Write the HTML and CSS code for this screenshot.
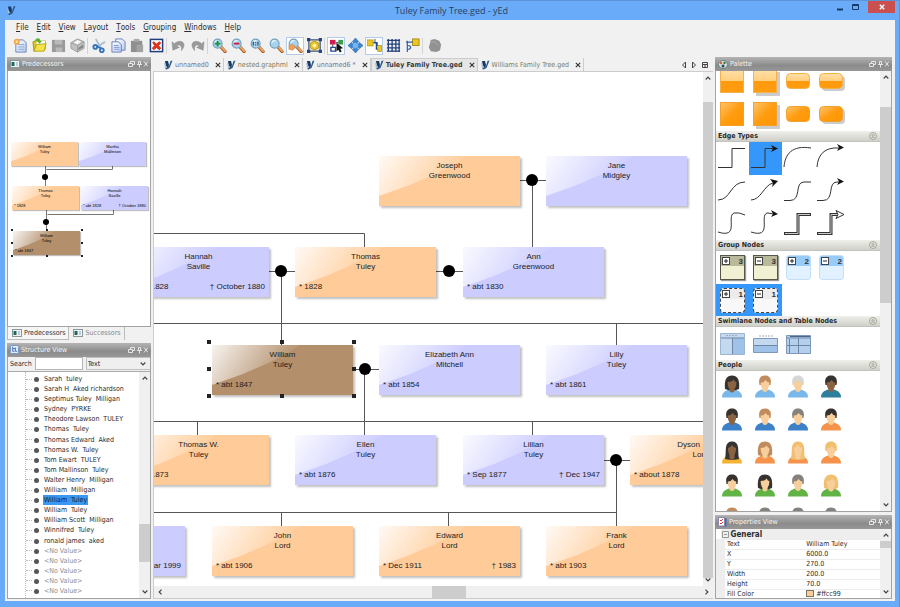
FILE: index.html
```html
<!DOCTYPE html>
<html lang="en">
<head>
<meta charset="utf-8">
<title>Tuley Family Tree.ged - yEd</title>
<link rel="stylesheet" href="styles.css">
</head>
<body>
<svg class="defs" aria-hidden="true">
  <defs>
    <linearGradient id="orangeGloss" x1="0" y1="0" x2="1" y2="1"><stop offset="0" stop-color="#ffc56e"/><stop offset=".5" stop-color="#ff9c10"/><stop offset="1" stop-color="#fe9500"/></linearGradient>
    <linearGradient id="orangeHalf" x1="0" y1="0" x2="0" y2="1"><stop offset="0" stop-color="#ffe0a8"/><stop offset=".5" stop-color="#ffcf80"/><stop offset=".5" stop-color="#ff9a0c"/><stop offset="1" stop-color="#ff9c10"/></linearGradient>
    <linearGradient id="page" x1="0" y1="0" x2="1" y2="1"><stop offset="0" stop-color="#fff"/><stop offset="1" stop-color="#b9cdf0"/></linearGradient>
    <symbol id="yed" viewBox="0 0 9 10"><path d="M1 1l3 0 1 4-1 3-2-2z" fill="#173a63"/><path d="M8.500 .5L5.500 8 2.500 9.500 1 9l2-2 2-1L6.500 1z" fill="#2b5788"/><path d="M0 2l3 5-2 1z" fill="#a8b8c8"/></symbol>
    <symbol id="panel" viewBox="0 0 10 8"><rect x=".5" y=".5" width="9" height="7" fill="#eef3f3" stroke="#899"/><rect x="1.500" y="2" width="3" height="4" fill="#23665d"/><rect x="6" y="2" width="2" height="4" fill="#bcd"/></symbol>
    <symbol id="struct" viewBox="0 0 10 10"><rect x=".5" y=".5" width="9" height="9" rx="1" fill="#dfeafa" stroke="#6d91c4"/><path d="M3 2v5h2M3 4h3M6 3v4h2" stroke="#3f6cab" fill="none"/></symbol>
    <symbol id="pal" viewBox="0 0 10 9"><ellipse cx="5" cy="4.500" rx="4.500" ry="4" fill="#d8dfdf" stroke="#687"/><circle cx="3" cy="3" r="1.200" fill="#c63"/><circle cx="6.500" cy="3" r="1.200" fill="#375"/><circle cx="5" cy="6" r="1.500" fill="#246"/></symbol>
    <symbol id="props" viewBox="0 0 9 10"><rect x="2" y="1" width="6.500" height="8.500" fill="#3b6abc"/><rect x=".5" y=".5" width="6" height="8.500" fill="#fff" stroke="#88a"/><path d="M2 3l1 1 2-2M2 6l1 1 2-2" stroke="#d33" fill="none"/></symbol>
    <symbol id="winbtns" viewBox="0 0 20 8"><g fill="none" stroke="#e6e6e6"><path d="M.5 3.500h4v3h-4zM2.500 3V1.500h4v3H5"/><path d="M9 4.500h5M10.500 4V1.500h2V4M11.500 5v2.500"/><path d="M16 1.500l4 5M20 1.500l-4 5"/></g></symbol>
    <symbol id="x" viewBox="0 0 6 6"><path d="M.8 .8l4.400 4.400M5.200 .8L.8 5.200" stroke="#333" stroke-width="1.100"/></symbol>
    <symbol id="up" viewBox="0 0 6 4"><path d="M.7 3.500L3 1.200l2.300 2.300" fill="none" stroke="#444" stroke-width="1.200"/></symbol>
    <symbol id="down" viewBox="0 0 6 4"><path d="M.7 .5L3 2.800 5.300 .5" fill="none" stroke="#444" stroke-width="1.200"/></symbol>
    <symbol id="left" viewBox="0 0 4 6"><path d="M3.500 .7L1.200 3l2.300 2.300" fill="none" stroke="#444" stroke-width="1.200"/></symbol>
    <symbol id="right" viewBox="0 0 4 6"><path d="M.5 .7L2.800 3 .5 5.300" fill="none" stroke="#444" stroke-width="1.200"/></symbol>
    <symbol id="fold" viewBox="0 0 8 8"><circle cx="4" cy="4" r="3.500" fill="#e4e4da" stroke="#999988" stroke-width=".8"/><path d="M2.500 4L4 2.500 5.500 4M2.500 6L4 4.500 5.500 6" fill="none" stroke="#777" stroke-width=".8"/></symbol>
    <symbol id="lens" viewBox="0 0 16 16"><path d="M9 9l5 5.500" stroke="#a9602c" stroke-width="3.400" stroke-linecap="round"/><path d="M9.500 9l4.500 5" stroke="#eda567" stroke-width="2" stroke-linecap="round"/><circle cx="6" cy="6" r="4.800" fill="#a9d3ec" stroke="#74a0bc" stroke-width="1.200"/><path d="M3 5a3.500 3.500 0 0 1 4-2" stroke="#e5f6ff" stroke-width="1.400" fill="none"/></symbol>
    <symbol id="p-short" viewBox="0 0 20 23"><path class="hair" d="M4.500 10C3 3 6 .5 10 .5s7 2.500 5.500 9.500z"/><path class="shirt" d="M0 22.500c0-5 3-6.500 7-8h6c4 1.500 7 3 7 8z"/><path class="skin" d="M7.500 12h5v3.500q-2.500 3-5 0z"/><path class="skin" d="M5.700 7.500q3 .2 5-2.500 1.500 2.500 3.600 2.500c.3 5-2 7.500-4.300 7.500s-4.600-2.500-4.300-7.500z"/></symbol>
    <symbol id="p-bob" viewBox="0 0 20 23"><path class="shirt" d="M0 22.500c0-5 3-6.500 7-8h6c4 1.500 7 3 7 8z"/><path class="hair" d="M3 14C2 4 5 .5 10 .5s8 3.500 7 13.500q-7 3-14 0z"/><path class="skin" d="M7.500 12h5v4q-2.500 3-5 0z"/><path class="skin" d="M5.700 7q4.300 0 6-2.500 1 2.500 2.600 2.500c.3 5-2 8-4.300 8s-4.600-3-4.300-8z"/></symbol>
    <symbol id="p-long" viewBox="0 0 20 23"><path class="shirt" d="M0 22.500c0-5 3-6.500 7-8h6c4 1.500 7 3 7 8z"/><path class="hair" d="M3 18C4 13 3.500 9 4 6 4.500 2.500 6.500 .5 10 .5s5.500 2 6 5.500c.5 3 0 7 1 12-2 1-12 1-14 0z"/><path class="skin" d="M7.500 12h5v5q-2.500 3-5 0z"/><path class="skin" d="M6 7q2.500-.5 4-3 1.500 2.500 4 3c.3 5-2 8-4 8s-4.300-3-4-8z"/></symbol>
    <symbol id="box-open" viewBox="0 0 8 8"><rect x=".5" y=".5" width="7" height="7" fill="#fff" stroke="#444"/><path d="M2 4h4M4 2v4" stroke="#222"/></symbol>
    <symbol id="box-closed" viewBox="0 0 8 8"><rect x=".5" y=".5" width="7" height="7" fill="#fff" stroke="#444"/><path d="M2 4h4" stroke="#222"/></symbol>
  </defs>
</svg>

<div class="window">
  <header class="titlebar">
    <svg class="app-icon"><use href="#yed"/></svg>
    <h1>Tuley Family Tree.ged - yEd</h1>
    <div class="winctl">
      <button aria-label="Minimize"><svg width="6" height="8"><path d="M0 6.500h6" stroke="#143a66" stroke-width="2"/></svg></button>
      <button aria-label="Maximize"><svg width="7" height="8"><path d="M.5 1.500h6v5h-6zM.5 2.500h6" fill="none" stroke="#143a66"/></svg></button>
      <button class="close" aria-label="Close"><svg width="6" height="6"><path d="M.8 .8l4.400 4.400M5.200 .8L.8 5.200" stroke="#fff" stroke-width="1.400"/></svg></button>
    </div>
  </header>

  <div class="client">
    <nav class="menubar">
      <button><u>F</u>ile</button><button><u>E</u>dit</button><button><u>V</u>iew</button><button><u>L</u>ayout</button><button><u>T</u>ools</button><button><u>G</u>rouping</button><button><u>W</u>indows</button><button><u>H</u>elp</button>
    </nav>
    <div class="toolbar">
      <button aria-label="New"><svg viewBox="0 0 16 16"><path d="M3 2h8l3 3v10H3z" fill="url(#page)" stroke="#6a83b8"/><path d="M5 7h7M5 9.500h7M5 12h7" stroke="#8ba6d6"/><circle cx="4" cy="4" r="3.200" fill="#f7a54a"/><circle cx="4" cy="4" r="1.300" fill="#fde9a0"/></svg></button>
      <button aria-label="Open"><svg viewBox="0 0 16 16"><path d="M1 4l5-2 2 2 6-1v9L2 14z" fill="#d8c221" stroke="#a39a1c"/><path d="M5 4l9-1-1 8-9 1z" fill="#fff"/><path d="M2 14l3-7 10-1-2 8z" fill="#f5e34a" stroke="#b3a51f"/><path d="M3 3c2-4 6-3 6 0l2 0-3 3-3-3h2" fill="#5cb531"/></svg></button>
      <button aria-label="Save"><svg viewBox="0 0 16 16"><path d="M1 2h14v13H1z" fill="#9a9a9a"/><path d="M4 2h8v5H4zM5 10h7v5H5z" fill="#b9b9b9"/></svg></button>
      <button aria-label="Print"><svg viewBox="0 0 16 16"><path d="M1 5l7-4 7 3v7l-7 4-7-4z" fill="#c2c2c2" stroke="#9d9d9d"/><path d="M1 5l7 3 7-4M8 8v7" fill="none" stroke="#9d9d9d"/><path d="M4 5l4-3 4 2-4 3z" fill="#f6f6f6"/><path d="M9 10l5-3v3l-5 3z" fill="#888"/></svg></button>
      <hr>
      <button aria-label="Cut"><svg viewBox="0 0 16 16"><path d="M4 1l5 9M14 4L6 9" stroke="#a9bccf" stroke-width="1.800"/><g fill="none" stroke="#3576b8" stroke-width="2"><circle cx="3.500" cy="9.500" r="2"/><circle cx="10.500" cy="13" r="2"/></g><path d="M5 9l5 2" stroke="#3576b8" stroke-width="2"/></svg></button>
      <button aria-label="Copy"><svg viewBox="0 0 16 16"><path d="M5 1h7l3 3v9H5z" fill="url(#page)" stroke="#6a7fb8"/><path d="M1 4h7l3 3v8H1z" fill="url(#page)" stroke="#6a7fb8"/><path d="M3 8h5M3 10h6M3 12h6" stroke="#7f97cf"/></svg></button>
      <button aria-label="Paste"><svg viewBox="0 0 16 16"><path d="M1 3h12v12H1z" fill="#8f8f8f"/><path d="M4 1h6v3H4z" fill="#aaa"/><path d="M7 7h7v8H7z" fill="#a2a2a2"/></svg></button>
      <button aria-label="Delete"><svg viewBox="0 0 16 16"><rect x="1.500" y="1.500" width="13" height="13" fill="#fff" stroke="#203c7c" stroke-width="1.600"/><path d="M4 5l1-1 3 2.500L11 4l1.500 1.500L10 8l2.500 3-1.500 1.500L8 10l-3 2.500L3.500 11 6 8z" fill="#e8321c" stroke="#c52b14"/></svg></button>
      <hr>
      <button aria-label="Undo"><svg viewBox="0 0 16 16"><path d="M1 4l1 9 7-3-3-1.500c3-2.500 6-.5 5 5C18 6 11 0 3.500 6z" fill="#9a9a9a" stroke="#888" stroke-width=".5"/></svg></button>
      <button aria-label="Redo"><svg viewBox="0 0 16 16"><path d="M15 4l-1 9-7-3 3-1.500c-3-2.500-6-.5-5 5C-2 6 5 0 12.500 6z" fill="#9a9a9a" stroke="#888" stroke-width=".5"/></svg></button>
      <hr>
      <button aria-label="Zoom in"><svg viewBox="0 0 16 16"><use href="#lens"/><path d="M3 6h6M6 3v6" stroke="#17933f" stroke-width="2"/></svg></button>
      <button aria-label="Zoom out"><svg viewBox="0 0 16 16"><use href="#lens"/><path d="M3 6h6" stroke="#d01f3a" stroke-width="2"/></svg></button>
      <button aria-label="Zoom 1:1"><svg viewBox="0 0 16 16"><use href="#lens"/><path d="M3.500 4v4M8.500 4v4M6 4.500v1M6 7v1" stroke="#245" stroke-width="1.200"/></svg></button>
      <button aria-label="Zoom"><svg viewBox="0 0 16 16"><use href="#lens"/></svg></button>
      <button class="on" aria-label="Zoom area"><svg viewBox="0 0 16 16"><use href="#lens"/><path d="M1 8l4-1 3 2-3 4-4-1z" fill="#f1a25a" stroke="#cd7a34" stroke-width=".6"/></svg></button>
      <button aria-label="Fit content"><svg viewBox="0 0 16 16"><rect x="2" y="2" width="12" height="12" fill="#f6efcf" stroke="#27447c" stroke-width="1.200"/><path d="M0 0h3.500v3.500H0zM12.500 0H16v3.500h-3.500zM0 12.500h3.500V16H0zM12.500 12.500H16V16h-3.500z" fill="#27447c"/><path d="M8 3l4.500 2.500v5L8 13l-4.500-2.500v-5z" fill="#e9c630" stroke="#9a8420" stroke-width=".8"/><circle cx="8" cy="8" r="2" fill="#fff3b0"/></svg></button>
      <hr>
      <button class="on" aria-label="Edit mode"><svg viewBox="0 0 16 16"><path d="M7 5h4M4 7v4" stroke="#333"/><path d="M1 2h6v5H1z" fill="#cf1d50"/><path d="M10 2h5v5h-5z" fill="#3d9d4f"/><path d="M2 10h5v4H2z" fill="#fff" stroke="#2a4a8a" stroke-width="1.500"/><path d="M8 5l7 6-3 .5 1.500 3-2 1-1.500-3-2 2z" fill="#111"/></svg></button>
      <button aria-label="Navigation mode"><svg viewBox="0 0 16 16"><path d="M8 0l3.500 4H10v2h2V4.500L16 8l-4 3.500V10h-2v2h1.500L8 16l-3.500-4H6v-2H4v1.500L0 8l4-3.500V6h2V4H4.500z" fill="#3b86d2" stroke="#2469b2" stroke-width=".6"/><circle cx="8" cy="8" r="3" fill="#72b4ee"/></svg></button>
      <button class="on" aria-label="Orthogonal edges"><svg viewBox="0 0 16 16"><path d="M6 5h4v7h3" fill="none" stroke="#234a8c" stroke-width="1.300"/><rect x="0" y="2" width="6.500" height="6.500" fill="#e9c622" stroke="#a58d19" stroke-width=".7"/><rect x="11.500" y="8" width="4" height="6.500" fill="#e9c622" stroke="#a58d19" stroke-width=".7"/><path d="M8.500 1v5M11 4.500v4" stroke="#234a8c"/></svg></button>
      <button aria-label="Grid"><svg viewBox="0 0 16 16"><path d="M2.500 1v14M6.500 1v14M10.500 1v14M14 1v14M1 2.500h14M1 6.500h14M1 10.500h14M1 14h14" stroke="#24427c" stroke-width="1.400"/></svg></button>
      <button aria-label="Snap lines"><svg viewBox="0 0 16 16"><rect x="8" y="1" width="7" height="7" fill="#e9c622" stroke="#a58d19"/><path d="M1 4.500h7M2.500 3v12M3 8c4 0 4 4 0 4" fill="none" stroke="#3560a8" stroke-width="1.300"/></svg></button>
      <hr>
      <button aria-label="Layout"><svg viewBox="0 0 16 16"><path d="M4 2l4-1 5 2 2 4-1 6-4 2-6-1-2-4 1-4z" fill="#929292"/><path d="M4 5l4-1 4 4" fill="none" stroke="#aaa"/></svg></button>
    </div>

    <div class="workspace">
      <aside class="side left">
        <section class="pane pred">
          <h2 class="phead"><svg width="10" height="8"><use href="#panel"/></svg>Predecessors<svg class="wb"><use href="#winbtns"/></svg></h2>
          <div class="mini">
            <svg class="edges"><g fill="none" stroke="#777"><path d="M37.500 95v24M104.500 95v3.500H38.500M38.500 139v26M105.500 139v4.500H39.500"/></g><circle cx="37" cy="106" r="3"/><circle cx="38" cy="151" r="3"/></svg>
            <div class="node m ma"><b>William<br>Tuley</b></div>
            <div class="node f mb"><b>Martha<br>Mallinson</b></div>
            <div class="node m mc"><b>Thomas<br>Tuley</b><p><span>* 1828</span></p></div>
            <div class="node f md"><b>Hannah<br>Saville</b><p><span>* abt 1828</span><span>† October 1880</span></p></div>
            <div class="node s me"><b>William<br>Tuley</b><p><span>* abt 1847</span></p></div>
            <svg class="edges"><path d="M3 158h2v2H3zM38 158h2v2h-2zM73 158h2v2h-2zM3 171h2v2H3zM73 171h2v2h-2zM3 184h2v2H3zM38 184h2v2h-2zM73 184h2v2h-2z" fill="#222"/></svg>
          </div>
        </section>
        <div class="ptabs">
          <button class="active"><svg width="10" height="8"><use href="#panel"/></svg>Predecessors</button>
          <button><svg width="10" height="8"><use href="#panel"/></svg>Successors</button>
        </div>
        <section class="pane tree">
          <h2 class="phead"><svg width="9" height="9"><use href="#struct"/></svg>Structure View<svg class="wb"><use href="#winbtns"/></svg></h2>
          <div class="search"><label for="q">Search</label><input id="q" type="text"><select aria-label="Search in"><option>Text</option></select><svg width="6" height="4"><use href="#down"/></svg></div>
          <div class="treebody">
            <ul>
              <li><span>Sarah&nbsp; tuley</span></li><li><span>Sarah H&nbsp; Aked richardson</span></li><li><span>Septimus Tuley&nbsp; Milligan</span></li><li><span>Sydney&nbsp; PYRKE</span></li><li><span>Theodore Lawson&nbsp; TULEY</span></li><li><span>Thomas&nbsp; Tuley</span></li><li><span>Thomas Edward&nbsp; Aked</span></li><li><span>Thomas W.&nbsp; Tuley</span></li><li><span>Tom Ewart&nbsp; TULEY</span></li><li><span>Tom Mallinson&nbsp; Tuley</span></li><li><span>Walter Henry&nbsp; Milligan</span></li><li><span>William&nbsp; Milligan</span></li><li class="sel"><span>William&nbsp; Tuley</span></li><li><span>William&nbsp; Tuley</span></li><li><span>William Scott&nbsp; Milligan</span></li><li><span>Winnifred&nbsp; Tuley</span></li><li><span>ronald james&nbsp; aked</span></li><li class="none"><span>&lt;No Value&gt;</span></li><li class="none"><span>&lt;No Value&gt;</span></li><li class="none"><span>&lt;No Value&gt;</span></li><li class="none"><span>&lt;No Value&gt;</span></li><li class="none"><span>&lt;No Value&gt;</span></li>
            </ul>
            <div class="vbar light"><svg width="6" height="4"><use href="#up"/></svg><i class="gap-tree"></i><i class="thumb"></i><i class="gap-tree-end"></i><svg width="6" height="4"><use href="#down"/></svg></div>
          </div>
        </section>
      </aside>

      <main class="center">
        <div class="tabs">
          <button><svg class="y"><use href="#yed"/></svg>unnamed0<svg class="tx"><use href="#x"/></svg></button>
          <button class="nested"><svg class="y"><use href="#yed"/></svg>nested.graphml<svg class="tx"><use href="#x"/></svg></button>
          <button><svg class="y"><use href="#yed"/></svg>unnamed6 *<svg class="tx"><use href="#x"/></svg></button>
          <button class="active"><svg class="y"><use href="#yed"/></svg>Tuley Family Tree.ged<svg class="tx"><use href="#x"/></svg></button>
          <button class="nested"><svg class="y"><use href="#yed"/></svg>Williams Family Tree.ged<svg class="tx"><use href="#x"/></svg></button>
          <svg class="tabnav" viewBox="0 0 28 8"><path d="M4.500 1v6L1.500 4zM11.500 1v6l3-3z" fill="none" stroke="#444"/><path d="M21.500 1.500h5v5h-5zM21 3.500h6M24 3v4" fill="none" stroke="#444"/></svg>
        </div>
        <div class="view">
          <div class="canvas">
            <svg class="edges">
              <g fill="none" stroke="#555">
                <path d="M366 108.500h26M378.500 108v67M0 161.500h210.500V175M114 199.500h27M127.500 199v74M282 199.500h27M0 251.500h549M462.500 251v22M198 297.500h27M210.500 297v66M0 349.500h549M43.500 349v14M378.500 349v14M449 388.500h27M462.500 388v66M0 440.500h462M127.500 440v14M294.500 440v14"/>
              </g>
              <g fill="#000"><circle cx="378" cy="108" r="6"/><circle cx="127" cy="199" r="6"/><circle cx="295" cy="199" r="6"/><circle cx="211" cy="297" r="6"/><circle cx="462" cy="388" r="6"/></g>
            </svg>
            <div class="node m c4 r1"><b>Joseph<br>Greenwood</b></div>
            <div class="node f c6 r1"><b>Jane<br>Midgley</b></div>
            <div class="node f c1 r2"><b>Hannah<br>Saville</b><p><span>* abt 1828</span><span>† October 1880</span></p></div>
            <div class="node m c3 r2"><b>Thomas<br>Tuley</b><p><span>* 1828</span></p></div>
            <div class="node f c5 r2"><b>Ann<br>Greenwood</b><p><span>* abt 1830</span></p></div>
            <div class="node s c2 r3"><b>William<br>Tuley</b><p><span>* abt 1847</span></p></div>
            <div class="node f c4 r3"><b>Elizabeth Ann<br>Mitchell</b><p><span>* abt 1854</span></p></div>
            <div class="node f c6 r3"><b>Lilly<br>Tuley</b><p><span>* abt 1861</span></p></div>
            <div class="node m c1 r4"><b>Thomas W.<br>Tuley</b><p><span>* abt 1873</span></p></div>
            <div class="node f c3 r4"><b>Ellen<br>Tuley</b><p><span>* abt 1876</span></p></div>
            <div class="node f c5 r4"><b>Lillian<br>Tuley</b><p><span>* Sep 1877</span><span>† Dec 1947</span></p></div>
            <div class="node m c7 r4"><b><span class="first">Dyson</span><br>Lord</b><p><span>* about 1878</span></p></div>
            <div class="node f c0 r5"><p class="end"><span>Mar 1999</span></p></div>
            <div class="node m c2 r5"><b>John<br>Lord</b><p><span>* abt 1906</span></p></div>
            <div class="node m c4 r5"><b>Edward<br>Lord</b><p><span>* Dec 1911</span><span>† 1983</span></p></div>
            <div class="node m c6 r5"><b>Frank<br>Lord</b><p><span>* abt 1903</span></p></div>
            <svg class="edges"><path d="M53 268h4v4h-4zM126 268h4v4h-4zM198 268h4v4h-4zM53 295h4v4h-4zM198 295h4v4h-4zM53 322h4v4h-4zM126 322h4v4h-4zM198 322h4v4h-4z" fill="#222"/></svg>
          </div>
          <div class="vbar dark"><svg width="6" height="4"><use href="#up"/></svg><i class="track-light"></i><i class="thumb fill"></i><svg width="6" height="4"><use href="#down"/></svg></div>
          <div class="hbar"><svg width="4" height="6"><use href="#left"/></svg><i></i><svg width="4" height="6"><use href="#right"/></svg></div>
        </div>
      </main>

      <aside class="side right">
        <section class="pane palette">
          <h2 class="phead"><svg width="10" height="9"><use href="#pal"/></svg>Palette<svg class="wb"><use href="#winbtns"/></svg></h2>
          <div class="palbody">
            <div class="sections">
              <div class="grid shapes">
                <svg viewBox="0 0 33 33"><rect x="4.500" y="4.500" width="23" height="23" fill="url(#orangeHalf)" stroke="#f3b14c"/></svg>
                <svg viewBox="0 0 33 33"><rect x="7" y="7" width="24" height="24" fill="#ccc"/><rect x="4.500" y="4.500" width="23" height="23" fill="url(#orangeHalf)" stroke="#f3b14c"/></svg>
                <svg viewBox="0 0 33 33"><rect x="4.500" y="8.500" width="23" height="15" rx="4" fill="url(#orangeHalf)" stroke="#f3b14c"/></svg>
                <svg viewBox="0 0 33 33"><rect x="7" y="11" width="23" height="15" rx="4" fill="#ccc"/><rect x="4.500" y="8.500" width="23" height="15" rx="4" fill="url(#orangeHalf)" stroke="#f3b14c"/></svg>
                <svg viewBox="0 0 33 33"><rect x="4.500" y="4.500" width="23" height="23" fill="url(#orangeGloss)" stroke="#f3a02c"/></svg>
                <svg viewBox="0 0 33 33"><rect x="7" y="7" width="24" height="24" fill="#ccc"/><rect x="4.500" y="4.500" width="23" height="23" fill="url(#orangeGloss)" stroke="#f3a02c"/></svg>
                <svg viewBox="0 0 33 33"><rect x="4.500" y="8.500" width="23" height="15" rx="4" fill="url(#orangeGloss)" stroke="#f3a02c"/></svg>
                <svg viewBox="0 0 33 33"><rect x="7" y="11" width="23" height="15" rx="4" fill="#ccc"/><rect x="4.500" y="8.500" width="23" height="15" rx="4" fill="url(#orangeGloss)" stroke="#f3a02c"/></svg>
              </div>
              <h3>Edge Types<svg><use href="#fold"/></svg></h3>
              <div class="grid lines">
                <svg viewBox="0 0 33 33"><path d="M2 25.500h14v-19h13"/></svg>
                <svg class="picked" viewBox="0 0 33 33"><path d="M2 25.500h14v-19h8"/><path class="tip" d="M22 3l7 3.500-7 3.500 2-3.500z"/></svg>
                <svg viewBox="0 0 33 33"><path d="M2 25C3 12 10 3 29 6"/></svg>
                <svg viewBox="0 0 33 33"><path d="M2 25C3 12 10 5 24 6"/><path class="tip" d="M22 2l7 3.500-7 3.500 2-3.500z"/></svg>
                <svg viewBox="0 0 33 33"><path d="M2 25c13 0 12-18 27-18"/></svg>
                <svg viewBox="0 0 33 33"><path d="M2 25C12 25 15 10 24 8"/><path class="tip" d="M21 4l8 2-6 6 1-4z"/></svg>
                <svg viewBox="0 0 33 33"><path d="M2 25.500h6c12 0 4-18.500 14-18.500h7"/></svg>
                <svg viewBox="0 0 33 33"><path d="M2 25.500h6c12 0 4-18.500 14-18.500h3"/><path class="tip" d="M22 3l7 3.500-7 3.500 2-3.500z"/></svg>
                <svg viewBox="0 0 33 33"><path d="M2 24C24 31 10 8 18 5q5-1 11 2"/></svg>
                <svg viewBox="0 0 33 33"><path d="M2 24C24 31 10 8 18 5q3 0 6 1"/><path class="tip" d="M22 2l7 4-7 3 2-3z"/></svg>
                <svg viewBox="0 0 33 33"><path d="M2 25.500h14v-19h13" stroke-width="3"/><path class="inner" d="M3 25.500h13v-19h12"/></svg>
                <svg viewBox="0 0 33 33"><path d="M2 25.500h14v-19h7" stroke-width="3"/><path class="inner" d="M3 25.500h13v-19h7"/><path d="M21 2.500l8 4-8 4 2-4z" class="hollow"/></svg>
              </div>
              <h3>Group Nodes<svg><use href="#fold"/></svg></h3>
              <div class="grid groups">
                <div class="olive"><span><svg><use href="#box-open"/></svg>3</span></div>
                <div class="olive"><span><svg><use href="#box-closed"/></svg>3</span></div>
                <div class="sky"><span><svg><use href="#box-open"/></svg>2</span></div>
                <div class="sky"><span><svg><use href="#box-closed"/></svg>2</span></div>
                <div class="dash"><span><svg><use href="#box-open"/></svg>1</span></div>
                <div class="dash"><span><svg><use href="#box-closed"/></svg>1</span></div>
              </div>
              <h3>Swimlane Nodes and Table Nodes<svg><use href="#fold"/></svg></h3>
              <div class="grid swim">
                <svg viewBox="0 0 33 33"><path d="M4.500 6.500h24v21h-24z" fill="#c3d9ef" stroke="#9db6d0"/><path d="M17 11h11v16H17z" fill="#9fc3e8"/><path d="M5 11h23M16.500 11v16" stroke="#6d87a5"/><path d="M10 8.500h12" stroke="#aab" stroke-dasharray="2 1"/></svg>
                <svg viewBox="0 0 33 33"><path d="M4.500 11.500h24v14h-24z" fill="#c3d9ef" stroke="#7d98b8"/><path d="M5 19h23v6H5z" fill="#9fc3e8"/><path d="M5 18.500h23" stroke="#6d87a5"/><path d="M10 9h14" stroke="#aab" stroke-dasharray="2 1"/></svg>
                <svg viewBox="0 0 33 33"><path d="M4.500 8.500h24v18h-24z" fill="#b4d0ec" stroke="#7d98b8"/><path d="M5 11h23M5 18.500h23M16.500 11v15M7.500 12v14" stroke="#6d87a5"/><path d="M8 9.500h20" stroke="#4a668c"/></svg>
              </div>
              <h3>People<svg><use href="#fold"/></svg></h3>
              <div class="grid people">
                <svg class="lb dark h-black"><use href="#p-bob"/></svg><svg class="lb h-brown"><use href="#p-short"/></svg><svg class="lb h-grey"><use href="#p-short"/></svg><svg class="teal dark h-black"><use href="#p-short"/></svg>
                <svg class="bl dark h-black"><use href="#p-short"/></svg><svg class="bl h-brown"><use href="#p-short"/></svg><svg class="bl h-ash"><use href="#p-short"/></svg><svg class="or h-black"><use href="#p-short"/></svg>
                <svg class="ye dark h-black"><use href="#p-long"/></svg><svg class="or h-brown"><use href="#p-bob"/></svg><svg class="or h-blond"><use href="#p-long"/></svg><svg class="or h-blond"><use href="#p-short"/></svg>
                <svg class="gr h-black"><use href="#p-short"/></svg><svg class="gr h-black"><use href="#p-bob"/></svg><svg class="gr h-ash"><use href="#p-short"/></svg><svg class="gr h-blond"><use href="#p-bob"/></svg>
                <svg class="gr h-brown"><use href="#p-short"/></svg><svg class="mono h-ash"><use href="#p-short"/></svg><svg class="mono h-ash"><use href="#p-short"/></svg><svg class="mono h-ash"><use href="#p-short"/></svg>
              </div>
            </div>
            <div class="vbar dark2"><svg width="6" height="4"><use href="#up"/></svg><i class="track-pal"></i><i class="thumb pal"></i><i class="fill"></i><svg width="6" height="4"><use href="#down"/></svg></div>
          </div>
        </section>
        <section class="pane props">
          <h2 class="phead"><svg width="9" height="10"><use href="#props"/></svg>Properties View<svg class="wb"><use href="#winbtns"/></svg></h2>
          <div class="propbody">
            <div class="ptable">
              <table>
                <thead><tr><th colspan="2"><svg viewBox="0 0 7 7"><path d="M.5 .5h6v6h-6zM2 3.500h3" fill="none" stroke="#999"/></svg>General</th></tr></thead>
                <tbody>
                  <tr><td>Text</td><td>William Tuley</td></tr>
                  <tr><td>X</td><td>6000.0</td></tr>
                  <tr><td>Y</td><td>270.0</td></tr>
                  <tr><td>Width</td><td>200.0</td></tr>
                  <tr><td>Height</td><td>70.0</td></tr>
                  <tr><td>Fill Color</td><td><i class="swatch"></i>#ffcc99</td></tr>
                </tbody>
              </table>
            </div>
            <div class="vbar light"><svg width="6" height="4"><use href="#up"/></svg><i class="thumb small"></i><i class="fill"></i><svg width="6" height="4"><use href="#down"/></svg></div>
          </div>
        </section>
      </aside>
    </div>
  </div>
</div>
</body>
</html>
```
FILE: styles.css
```css
* { box-sizing: border-box; }
body {
  margin: 0;
  font-family: "DejaVu Sans Condensed", "DejaVu Sans", sans-serif;
  font-size: 7px;
  line-height: 10px;
  color: #2b2b2b;
}
svg { display: block; flex: none; }
i { display: block; flex: none; }
button {
  font: inherit;
  color: inherit;
  border: 0;
  padding: 0;
  background: none;
  display: flex;
  align-items: center;
}
h1, h2, h3, p, ul { margin: 0; padding: 0; font-size: inherit; font-weight: normal; }
.defs { position: absolute; width: 0; height: 0; }

.window {
  height: 100vh;
  display: flex;
  flex-direction: column;
  background: #69abf8;
  border-top: 1px solid #5c94d6;
  border-right: 1px solid #5c94d6;
  padding: 0 4px 6px 5px;
}
.titlebar { display: flex; align-items: center; height: 19px; flex: none; }
.titlebar h1 {
  flex: 1;
  text-align: center;
  font: 9px/18px "Open Sans", "Noto Sans", sans-serif;
  color: #28405e;
  padding-left: 50px;
}
.app-icon { width: 9px; height: 11px; margin-left: 2px; }
.winctl { display: flex; align-self: flex-start; height: 12px; gap: 9px; align-items: center; }
.winctl .close { background: #c9504f; width: 27px; height: 12px; justify-content: center; }

.client { flex: 1; min-height: 0; display: flex; flex-direction: column; background: #f1f1f1; }
.menubar { display: flex; gap: 8px; height: 16px; padding-left: 11px; flex: none; font-size: 8px; }
.menubar u { text-decoration-thickness: 1px; text-underline-offset: 1px; }
.toolbar { display: flex; align-items: center; height: 19px; gap: 1px; padding-left: 6px; flex: none; }
.toolbar button { width: 18px; height: 18px; justify-content: center; border: 1px solid transparent; }
.toolbar svg { width: 15px; height: 15px; }
.toolbar .on { background: #fff; border-color: #b3cbe6; }
.toolbar hr { width: 1px; height: 16px; margin: 0 1px 0 0; border: 0; background: #d4d4d4; }

.workspace { flex: 1; min-height: 0; display: flex; gap: 2px; padding: 2px 3px 2px 2px; }
.side { display: flex; flex-direction: column; flex: none; }
.left { width: 144px; }
.right { width: 177px; gap: 3px; }
.pane {
  display: flex;
  flex-direction: column;
  min-height: 0;
  background: #fff;
  border: 1px solid #a3a3a3;
  border-width: 0 1px 1px;
}
.phead {
  display: flex;
  align-items: center;
  gap: 2px;
  height: 14px;
  flex: none;
  padding: 0 3px 0 3px;
  margin: 0 -1px;
  color: #f5f5f5;
  background: linear-gradient(#b4b4b4, #8b8b8b 60%, #979797);
}
.phead .wb { width: 20px; height: 8px; margin-left: auto; }

.pred { flex: 270 1 0; }
.mini { position: relative; flex: 1; overflow: hidden; }
.ptabs { display: flex; height: 16px; flex: none; align-items: flex-start; }
.ptabs button { gap: 2px; height: 13px; padding: 0 3px 0 4px; border-right: 1px solid #bbb; color: #888; }
.ptabs .active { border: 1px solid #bbb; border-top: 0; color: #333; background: #f6f6f6; }

.tree { flex: 256 1 0; }
.search { display: flex; align-items: center; height: 15px; flex: none; background: #f1f1f1; padding: 0 0 0 2px; gap: 3px; border-bottom: 1px solid #aaa; }
.search input { width: 48px; height: 13px; border: 1px solid #b4b4b4; padding: 0 2px; font: inherit; background: #fff; margin-left: auto; }
.search select {
  appearance: none;
  width: 65px;
  height: 13px;
  border: 1px solid #c0c0c0;
  border-right: 0;
  padding: 0 1px;
  font: inherit;
  color: inherit;
  background: #efefef;
  margin-right: -13px;
}
.search svg { margin-right: 4px; }
.treebody { flex: 1; min-height: 0; display: flex; }
.treebody ul { flex: 1; display: flex; flex-direction: column; padding: 2px 0 2px; list-style: none; margin-left: 17px; border-left: 1px dotted #bbb; white-space: nowrap; }
.treebody li { flex: 1; display: flex; align-items: center; }
.treebody li::before { content: ""; width: 6px; margin-right: 3px; border-top: 1px dotted #bbb; }
.treebody li span { position: relative; display: block; margin-left: 8px; padding: 0 1px; }
.treebody li span::before {
  content: "";
  position: absolute;
  left: -9px;
  top: 3px;
  width: 5px;
  height: 5px;
  border-radius: 50%;
  background: #555;
}
.treebody .sel span { background: #3a97f2; color: #123; }
.treebody .none { color: #8d8d8d; }

.vbar { width: 11px; flex: none; display: flex; flex-direction: column; align-items: center; padding: 4px 0; background: #f0f0f0; }
.vbar i { width: 100%; }
.vbar .thumb { background: #cdcdcd; }
.vbar .fill, .vbar .thumb.fill { flex: 1; }
.vbar .gap-tree { flex: 144 1 0; }
.vbar .gap-tree-end { flex: 28 1 0; }
.treebody .thumb { flex: 38 1 0; }
.vbar .small { height: 7px; margin-top: 4px; }
.track-light { height: 22px; }
.vbar.dark { width: 10px; }
.track-pal { height: 28px; }
.vbar .pal { flex: 195 1 0; }
.dark2 .fill { flex: 200 1 0; }

.center { flex: 1; min-width: 0; display: flex; flex-direction: column; }
.tabs { display: flex; height: 14px; flex: none; align-items: stretch; padding: 1px 0 0 8px; white-space: nowrap; overflow: hidden; }
.tabs button { padding: 0 2px 0 3px; color: #73739a; border-right: 1px solid #ccc; }
.tabs .nested { color: #7d7d5c; }
.tabs .active { font-weight: bold; color: #3a3a3a; background: #e6e6e6; border: 1px solid #ccc; border-bottom: 0; }
.tabs .y { width: 9px; height: 10px; margin-right: 2px; }
.tabs .tx { width: 6px; height: 6px; margin-left: 6px; }
.tabs .tabnav { width: 28px; height: 8px; margin: 3px 4px 0 auto; }
.view { flex: 1; min-height: 0; display: grid; grid-template: 1fr 12px / 1fr 10px; border: 1px solid #ccc; border-width: 1px 0 1px 1px; }
.canvas { position: relative; overflow: hidden; background: #fff; }
.hbar { grid-column: 1 / 3; display: flex; align-items: center; padding: 0 4px; background: #f0f0f0; }
.hbar i { width: 34px; height: 12px; background: #cdcdcd; margin: 0 auto 0 49%; }

.edges { position: absolute; left: 0; top: 0; width: 100%; height: 100%; }
.node {
  position: absolute;
  width: 141px;
  height: 50px;
  display: flex;
  flex-direction: column;
  justify-content: space-between;
  padding: 5px 4px;
  font: 8px/10px "Liberation Sans", Arial, sans-serif;
  color: #222;
  box-shadow: 2px 2px 2px rgba(0, 0, 0, .25);
  white-space: nowrap;
}
.node::before {
  content: "";
  position: absolute;
  inset: 0;
  background: linear-gradient(125deg, rgba(255, 255, 255, .9), rgba(255, 255, 255, .1) 46%);
  clip-path: polygon(0 0, 62% 0, 54% 16%, 40% 36%, 22% 58%, 0 80%);
}
.node b { position: relative; font-weight: normal; text-align: center; }
.node p { position: relative; display: flex; justify-content: space-between; }
.node .end { margin-top: auto; justify-content: flex-end; }
.node .first { padding-right: 24px; }
.m { background: #ffcc99; }
.f { background: #ccccff; }
.s { background: #b38f6b; }
.c0 { left: -110px; } .c1 { left: -26px; } .c2 { left: 58px; } .c3 { left: 141px; }
.c4 { left: 225px; } .c5 { left: 309px; } .c6 { left: 392px; } .c7 { left: 476px; }
.r1 { top: 84px; } .r2 { top: 175px; } .r3 { top: 273px; } .r4 { top: 363px; } .r5 { top: 454px; }
.mini .node { width: 67px; height: 24px; font-size: 4px; line-height: 5px; padding: 2px; color: #000; box-shadow: 1px 1px 1px rgba(0, 0, 0, .25); }
.ma { left: 3px; top: 71px; } .mb { left: 71px; top: 71px; }
.mc { left: 4px; top: 115px; } .md { left: 73px; top: 115px; } .me { left: 5px; top: 160px; }

.palette { flex: 456 1 0; }
.palbody, .propbody { flex: 1; min-height: 0; display: flex; }
.sections { flex: 1; min-width: 0; display: flex; flex-direction: column; overflow: hidden; }
.sections h3 {
  display: flex;
  align-items: center;
  justify-content: space-between;
  height: 11px;
  flex: none;
  padding: 0 3px 0 2px;
  font-weight: bold;
  background: linear-gradient(#efefeb, #d0d0ca);
  border-bottom: 1px solid #c3c3bd;
}
.sections h3 svg { width: 8px; height: 8px; }
.grid { display: grid; grid-template-columns: repeat(4, 33px); grid-auto-rows: 33px; flex: none; }
.shapes { height: 60px; align-content: end; overflow: hidden; }
.lines { height: 98px; }
.lines path { fill: none; stroke: #333; }
.lines .tip { fill: #111; stroke: none; }
.lines .inner { stroke: #ccc; }
.lines .hollow { fill: #fff; }
.picked { background: #3697fb; }
.groups { height: 65px; }
.groups div { padding: 4px; }
.groups span { display: flex; justify-content: space-between; align-items: flex-start; height: 25px; padding: 1px; border: 1px solid; color: #333; font: bold 8px/9px "Liberation Sans", sans-serif; }
.groups svg { width: 8px; height: 8px; }
.groups .olive span { border-color: #555548; background: linear-gradient(#b9b99b 10px, #f1f0d3 10px); box-shadow: 1px 1px 1px #999; }
.groups .sky span { border-color: #c5e0f6; border-radius: 3px; background: linear-gradient(#96cbfa 10px, #e1f1ff 10px); }
.groups .dash { background: #3697fb; }
.groups .dash span { border: 1px dashed #444; border-radius: 4px; background: linear-gradient(#ececec 10px, #f8f8f8 10px); }
.swim { height: 33px; }
.people { padding-left: 6px; padding-top: 4px; }
.people svg { width: 20px; height: 23px; }
.shirt { fill: var(--shirt); }
.skin { fill: var(--skin); }
.hair { fill: var(--hair); }
.people svg { --skin: #f8cf9a; }
.people .dark { --skin: #8a6342; }
.lb { --shirt: #78b8ea; } .bl { --shirt: #3c80c8; } .teal { --shirt: #2d7f9b; } .or { --shirt: #f6924a; }
.ye { --shirt: #f5b336; } .gr { --shirt: #62b345; } .mono { --shirt: #888; }
.h-black { --hair: #363230; } .h-brown { --hair: #c08c5e; } .h-grey { --hair: #d6d6d6; } .h-ash { --hair: #85827d; } .h-blond { --hair: #f0c070; }
.people .mono { --skin: #909090; }

.props { flex: 83 1 0; }
.ptable { flex: 1; min-width: 0; overflow: hidden; background: #fff; }
.ptable table { width: 100%; border-collapse: collapse; table-layout: fixed; }
.ptable tr { height: 10px; }
.ptable th, .ptable td { padding: 0; line-height: 9px; border-bottom: 1px solid #ececec; text-align: left; white-space: nowrap; }
.ptable th { background: #eee; font-size: 8px; }
.ptable th svg { display: inline-block; width: 7px; height: 7px; margin: 0 2px 0 1px; vertical-align: -1px; }
.ptable td:first-child { border-left: 9px solid #eee; padding-left: 2px; }
.ptable td + td { padding-left: 6px; }
.swatch { display: inline-block; width: 8px; height: 7px; margin-right: 2px; border: 1px solid #776; background: #ffcc99; vertical-align: -1px; }
```
